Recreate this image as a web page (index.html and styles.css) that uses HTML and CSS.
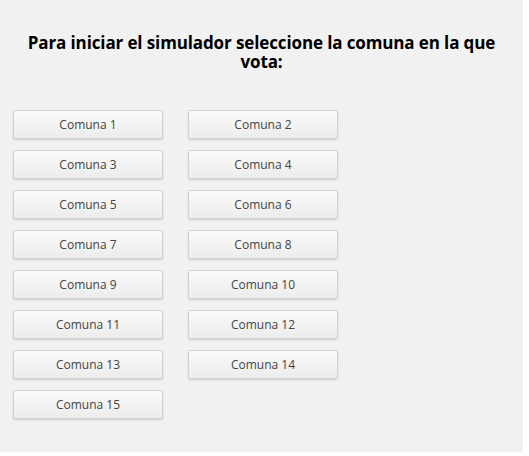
FILE: index.html
```html
<!DOCTYPE html>
<html lang="es">
<head>
<meta charset="utf-8">
<link rel="stylesheet" href="styles.css">
</head>
<body>
<div class="frame">
  <h1 class="title">Para iniciar el simulador seleccione la comuna en la que vota:</h1>
  <div class="grid">
    <button class="btn">Comuna 1</button>
    <button class="btn">Comuna 2</button>
    <button class="btn">Comuna 3</button>
    <button class="btn">Comuna 4</button>
    <button class="btn">Comuna 5</button>
    <button class="btn">Comuna 6</button>
    <button class="btn">Comuna 7</button>
    <button class="btn">Comuna 8</button>
    <button class="btn">Comuna 9</button>
    <button class="btn">Comuna 10</button>
    <button class="btn">Comuna 11</button>
    <button class="btn">Comuna 12</button>
    <button class="btn">Comuna 13</button>
    <button class="btn">Comuna 14</button>
    <button class="btn">Comuna 15</button>
  </div>
</div>
</body>
</html>
```
FILE: styles.css
```css
html, body {
  margin: 0;
  padding: 0;
  background: #ffffff;
}
.frame {
  width: 523px;
  height: 452px;
  background: #f1f1f1;
  box-sizing: border-box;
  padding: 33px 0 0 13px;
  font-family: "Open Sans", sans-serif;
}
.title {
  margin: 0 0 39px -13px;
  width: 523px;
  text-align: center;
  font-size: 17px;
  line-height: 19px;
  font-weight: 700;
  letter-spacing: -0.12px;
  color: #000;
  padding: 0 22px;
  box-sizing: border-box;
}
.grid {
  display: grid;
  grid-template-columns: 150px 150px;
  column-gap: 25px;
  row-gap: 11px;
}
.btn {
  height: 29px;
  margin: 0;
  padding: 0;
  border: 1px solid #d3d3d3;
  border-radius: 2px;
  background: linear-gradient(#fafafa, #ececec);
  box-shadow: 0 1px 2px rgba(0,0,0,0.15);
  font-family: "Open Sans", sans-serif;
  font-size: 12px;
  color: #444;
}
```
